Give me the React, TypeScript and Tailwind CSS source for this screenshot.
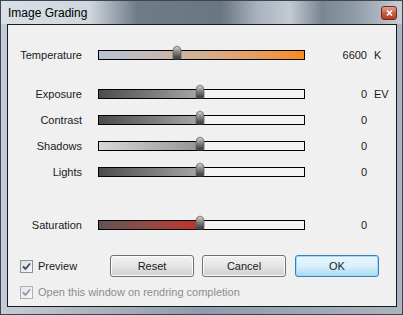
import React from "react";

type SliderProps = {
  label: string;
  value: string;
  unit?: string;
  pos: number;
  fill: string;
  full?: boolean;
};

function Thumb() {
  return (
    <svg width="10" height="15" viewBox="0 0 10 15" className="block">
      <defs>
        <linearGradient id="thumbGrad" x1="0" y1="0" x2="0" y2="1">
          <stop offset="0" stopColor="#dedede" />
          <stop offset="0.4" stopColor="#8e8e8e" />
          <stop offset="1" stopColor="#353535" />
        </linearGradient>
      </defs>
      <path
        d="M1 6 Q1 1.5 5 1 Q9 1.5 9 6 L9 13 Q9 14 8 14 L2 14 Q1 14 1 13 Z"
        fill="url(#thumbGrad)"
        stroke="#606060"
        strokeWidth="0.8"
      />
    </svg>
  );
}

function SliderRow({ label, value, unit, pos, fill, full }: SliderProps) {
  const px = Math.round(pos * 205);
  return (
    <div className="flex items-center h-[26px]">
      <div className="w-[74px] text-right">{label}</div>
      <div className="relative ml-[16px] w-[207px] h-[10px] border border-black bg-[#f4f4f4]">
        <div
          className={`absolute left-0 top-0 bottom-0 ${fill}`}
          style={{ width: full ? "100%" : px + "px" }}
        ></div>
        <div className="absolute top-[-6px]" style={{ left: px - 5 + "px" }}>
          <Thumb />
        </div>
      </div>
      <div className="w-[62px] text-right">{value}</div>
      {unit && <div className="ml-[7px]">{unit}</div>}
    </div>
  );
}

function CheckBox({ disabled }: { disabled?: boolean }) {
  return (
    <div
      className={`w-[13px] h-[13px] border flex items-center justify-center ${
        disabled
          ? "border-[#b0b0b0] bg-gradient-to-br from-[#e4e4e4] to-[#f8f8f8]"
          : "border-[#8e8f8f] bg-gradient-to-br from-[#dcdcdc] to-[#fafafa]"
      }`}
    >
      <svg width="9" height="9" viewBox="0 0 9 9">
        <path
          d="M1 4.5 L3.5 7 L8 1.5"
          fill="none"
          stroke={disabled ? "#8a97b5" : "#33477a"}
          strokeWidth="1.8"
        />
      </svg>
    </div>
  );
}

function Button({ text, isDefault }: { text: string; isDefault?: boolean }) {
  return (
    <div
      className={`w-[84px] h-[22px] rounded-[3px] border flex items-center justify-center ${
        isDefault
          ? "border-[#3c7fb1] bg-gradient-to-b from-[#eaf6fd] via-[#d9f0fc] to-[#a7d9f5] shadow-[inset_0_0_0_1px_#9fdcfb]"
          : "border-[#707070] bg-gradient-to-b from-[#f2f2f2] via-[#e4e4e4] to-[#cfcfcf] shadow-[inset_0_0_0_1px_#fcfcfc]"
      }`}
    >
      {text}
    </div>
  );
}

export default function App() {
  return (
    <div
      className="w-[403px] h-[315px] border border-[#3b4652] bg-gradient-to-r from-[#c3ccd6] via-[#8f9ba8] to-[#a9b4bf] text-[11px] text-[#1a1a1a]"
      style={{ fontFamily: '"Liberation Sans", Arial, sans-serif' }}
    >
      {/* title bar, blurred glass */}
      <div className="flex items-center justify-between h-[23px] pl-[7px] pr-[5px] bg-[linear-gradient(to_right,#d8dfe6_0%,#cfd6de_22%,#6f7b87_34%,#6a7682_55%,#a9b3bd_64%,#c2cad2_72%,#7a8691_80%,#8e9aa5_88%,#c7ced6_100%)]">
        <div className="text-[12px] text-black">Image Grading</div>
        <div className="w-[16px] h-[14px] rounded-[3px] border border-[#6e2a1c] bg-gradient-to-b from-[#e3a391] via-[#cc5c41] to-[#b63c22] flex items-center justify-center">
          <svg width="7" height="6" viewBox="0 0 7 6">
            <path d="M1 0.5 L6 5.5 M6 0.5 L1 5.5" stroke="white" strokeWidth="1.6" />
          </svg>
        </div>
      </div>

      {/* client area */}
      <div className="ml-[6px] w-[390px] h-[283px] border border-[#1a1a1a] bg-[#f0f0f0] pt-[17px]">
        <SliderRow
          label="Temperature"
          value="6600"
          unit="K"
          pos={0.38}
          full
          fill="bg-gradient-to-r from-[#b6c2d8] via-[#d3b08f] to-[#f88a1c]"
        />
        <div className="h-[13px]"></div>
        <SliderRow
          label="Exposure"
          value="0"
          unit="EV"
          pos={0.495}
          fill="bg-gradient-to-r from-[#4c4c4c] to-[#a8a8a8]"
        />
        <SliderRow
          label="Contrast"
          value="0"
          pos={0.495}
          fill="bg-gradient-to-r from-[#4c4c4c] to-[#a8a8a8]"
        />
        <SliderRow
          label="Shadows"
          value="0"
          pos={0.495}
          fill="bg-gradient-to-r from-[#d8d8d8] to-[#959595]"
        />
        <SliderRow
          label="Lights"
          value="0"
          pos={0.495}
          fill="bg-gradient-to-r from-[#4c4c4c] to-[#a8a8a8]"
        />
        <div className="h-[27px]"></div>
        <SliderRow
          label="Saturation"
          value="0"
          pos={0.495}
          fill="bg-gradient-to-r from-[#5e5454] to-[#c42c2c]"
        />

        <div className="flex items-center mt-[17px] h-[22px]">
          <div className="ml-[12px]">
            <CheckBox />
          </div>
          <div className="ml-[5px] w-[72px]">Preview</div>
          <Button text="Reset" />
          <div className="ml-[8px]">
            <Button text="Cancel" />
          </div>
          <div className="ml-[9px]">
            <Button text="OK" isDefault />
          </div>
        </div>

        <div className="flex items-center mt-[7px] h-[16px]">
          <div className="ml-[12px]">
            <CheckBox disabled />
          </div>
          <div className="ml-[5px] text-[#8d8d8d]">
            Open this window on rendring completion
          </div>
        </div>
      </div>
    </div>
  );
}
